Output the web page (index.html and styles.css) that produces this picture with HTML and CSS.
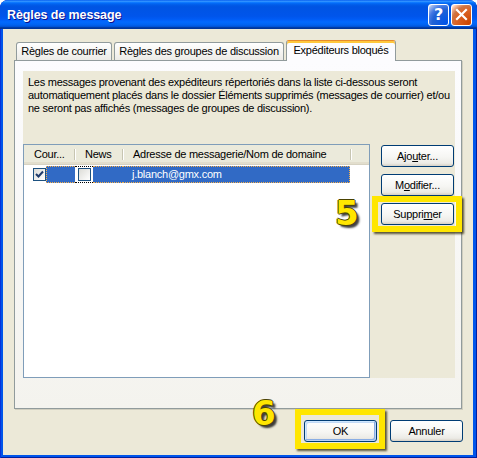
FILE: index.html
```html
<!DOCTYPE html>
<html lang="fr">
<head>
  <meta charset="UTF-8">
  <title>Règles de message</title>
  <link rel="stylesheet" href="styles.css">
</head>
<body>
  <div class="window">
    <div class="titlebar">
      <span class="title">Règles de message</span>
      <span class="cbtn help">?</span>
      <span class="cbtn close">
        <svg width="19" height="19" viewBox="0 0 19 19"><path d="M5 5 L14 14 M14 5 L5 14" stroke="#fff" stroke-width="2.2" stroke-linecap="square"/></svg>
      </span>
    </div>
    <div class="client">
      <div class="tabs">
        <div class="tab tab-mail">Règles de courrier</div>
        <div class="tab tab-news">Règles des groupes de discussion</div>
        <div class="tab tab-blocked active">Expéditeurs bloqués</div>
      </div>
      <div class="panel">
        <div class="page">
          <p class="intro">Les messages provenant des expéditeurs répertoriés dans la liste ci-dessous seront<br>automatiquement placés dans le dossier Éléments supprimés (messages de courrier) et/ou<br>ne seront pas affichés (messages de groupes de discussion).</p>
          <div class="list-area">
            <div class="listview">
              <div class="lv-head">
                <div class="col c1">Cour...</div>
                <div class="col c2">News</div>
                <div class="col c3">Adresse de messagerie/Nom de domaine</div>
              </div>
              <div class="lv-row">
                <div class="cell c1">
                  <span class="state"><span class="chk"><svg width="11" height="11" viewBox="0 0 11 11"><path d="M2 5 L4.5 7.5 L9 2.5" fill="none" stroke="#1F3B6B" stroke-width="2"/></svg></span></span>
                  <span class="sel first"></span>
                </div>
                <div class="cell c2">
                  <span class="sub"><span class="chk"></span></span>
                  <span class="sel"></span>
                </div>
                <div class="cell c3">
                  <span class="sel last">j.blanch@gmx.com</span>
                </div>
              </div>
            </div>
            <div class="side-btns">
              <button class="btn">Ajo<u>u</u>ter...</button>
              <button class="btn">M<u>o</u>difier...</button>
              <div class="callout callout-del">
                <button class="btn">Suppri<u>m</u>er</button>
                <span class="step step-5">5</span>
              </div>
            </div>
          </div>
        </div>
      </div>
      <div class="dialog-btns">
        <div class="callout callout-ok">
          <button class="btn default">OK</button>
          <span class="step step-6">6</span>
        </div>
        <button class="btn">Annuler</button>
      </div>
    </div>
  </div>
</body>
</html>
```

FILE: styles.css
```css
body { margin: 0; background: #fff; font-family: "Liberation Sans", Arial, sans-serif; font-size: 11px; letter-spacing: -0.25px; color: #000; }

.window { width: 477px; height: 458px; box-sizing: border-box; background: #0055EA; border-radius: 8px 8px 0 0; display: flex; flex-direction: column; box-shadow: inset 1px 0 #0831D9, inset -1px -1px #001EA0; overflow: hidden; }

/* barre de titre */
.titlebar { height: 29px; flex: none; display: flex; align-items: center; padding: 0 5px 0 7px; border-radius: 7px 7px 0 0;
  background: linear-gradient(to bottom, #0058EE 0%, #3593FF 4%, #288EFF 6%, #127DFF 8%, #036FFC 10%, #0262EE 14%, #0057E5 20%, #0054E3 24%, #0055EB 56%, #005BF5 66%, #026AFE 76%, #0062EF 86%, #0052D6 92%, #0040AB 94%, #003092 100%); }
.title { flex: 1; color: #fff; font-weight: bold; font-size: 12.5px; letter-spacing: -0.1px; padding-top: 1px; text-shadow: 1px 1px #0F1089; }
.cbtn { width: 21px; height: 22px; box-sizing: border-box; border: 1px solid #fff; border-radius: 3px; display: flex; align-items: center; justify-content: center; }
.help { margin-right: 2px; color: #fff; font: bold 16px "DejaVu Sans", sans-serif; background: radial-gradient(circle at 90% 90%, #0054E9 0%, #2263D5 55%, #4479E4 70%, #A3BBEC 90%, #fff 100%); }
.close { background: radial-gradient(circle at 90% 90%, #CC4600 0%, #DC6527 55%, #CD7546 70%, #FFCCB2 90%, #fff 100%); }

.client { flex: 1; margin: 0 4px 3px 3px; background: #ECE9D8; padding: 11px 10px 0 11px; }

/* onglets */
.tabs { display: flex; align-items: flex-end; height: 20px; padding-left: 2px; position: relative; z-index: 1; }
.tab { height: 18px; box-sizing: border-box; border: 1px solid #919B9C; border-bottom: none; border-radius: 3px 3px 0 0; background: linear-gradient(#FFFFFF, #ECEBE6); text-align: center; line-height: 17px; margin-right: 2px; white-space: nowrap; }
.tab-mail { width: 96px; }
.tab-news { width: 170px; }
.tab-blocked { width: 110px; }
.tab.active { height: 21px; margin-bottom: -1px; background: #FCFCFE; border-top: 1px solid #E68B2C; box-shadow: inset 0 2px #FFC83C; line-height: 19px; }

.panel { width: 448px; height: 349px; box-sizing: border-box; border: 1px solid #919B9C; box-shadow: 1px 1px 0 #D0CEBF; background: linear-gradient(#FCFCFE, #F4F3EE); padding: 10px 6px 0 8px; }
.page { width: 432px; height: 307px; background: #ECE9D8; display: flex; flex-direction: column; }
.intro { margin: 0; padding: 5px 5px 0; line-height: 13px; white-space: nowrap; }
.list-area { margin-top: auto; display: flex; align-items: flex-start; }

/* liste */
.listview { width: 347px; height: 234px; box-sizing: border-box; border: 1px solid #7F9DB9; background: #fff; }
.lv-head { display: flex; height: 20px; box-sizing: border-box; background: #EBEADB; border-bottom: 1px solid #D6D2C2; box-shadow: inset 0 -2px #E2DECD; }
.col { position: relative; box-sizing: border-box; padding-left: 10px; line-height: 19px; white-space: nowrap; }
.col::after { content: ""; position: absolute; right: 0; top: 4px; bottom: 4px; width: 1px; background: #C7C5B2; box-shadow: 1px 0 #fff; }
.c1 { width: 51px; }
.c2 { width: 48px; }
.c3 { width: 228px; }
.lv-row { display: flex; height: 17px; margin-top: 1px; }
.cell { display: flex; }
.state { width: 22px; box-sizing: border-box; padding-left: 9px; display: flex; align-items: center; }
.sub { width: 18px; box-sizing: border-box; padding-left: 3px; display: flex; align-items: center; border-top: 1px dotted #000; border-bottom: 1px dotted #000; }
.chk { width: 13px; height: 13px; box-sizing: border-box; border: 1px solid #1C5180; background: linear-gradient(135deg, #DCDCD7, #fff); display: block; }
.chk svg { display: block; }
.sel { flex: 1; box-sizing: border-box; background: #316AC5; border-top: 1px dotted #F5B04C; border-bottom: 1px dotted #F5B04C; color: #fff; }
.sel.first { border-left: 1px dotted #F5B04C; }
.sel.last { flex: none; width: 227px; border-right: 1px dotted #F5B04C; padding-left: 9px; line-height: 15px; }

/* boutons */
.btn { display: block; width: 73px; height: 22px; box-sizing: border-box; padding: 0; border: 1px solid #003C74; border-radius: 3px; background: linear-gradient(180deg, #FFFFFF 0%, #F6F6F3 55%, #ECEBE6 86%, #D6D0C5 100%); font: inherit; letter-spacing: inherit; color: #000; }
.btn.default { box-shadow: inset -1px -1px #B8D2F7, inset 1px 1px #CEE7FF, inset -2px -2px #89ADE4, inset 2px 2px #C2D9F5; }
.side-btns { margin-left: 11px; padding-top: 1px; display: flex; flex-direction: column; gap: 7px; }
.dialog-btns { margin-top: 11px; display: flex; justify-content: flex-end; gap: 13px; }

/* repères jaunes */
.callout { position: relative; }
.callout::after { content: ""; position: absolute; border: 6px solid #FFE600; box-shadow: 2px 2px 2px rgba(40, 35, 0, 0.75); pointer-events: none; }
.callout-del::after { top: -7px; bottom: -7px; left: -9px; right: -8px; }
.callout-ok::after { top: -11px; bottom: -7px; left: -9px; right: -8px; }
.step { position: absolute; font: bold 34px/1 "DejaVu Sans", sans-serif; letter-spacing: 0; color: #FFE600; text-shadow: -1px 0 #4A4200, 1px 0 #4A4200, 0 -1px #4A4200, 0 1px #4A4200, 3px 3px 2px rgba(0, 0, 0, 0.75); }
.step-5 { left: -46px; top: -7px; }
.step-6 { left: -52px; top: -24px; }
```
